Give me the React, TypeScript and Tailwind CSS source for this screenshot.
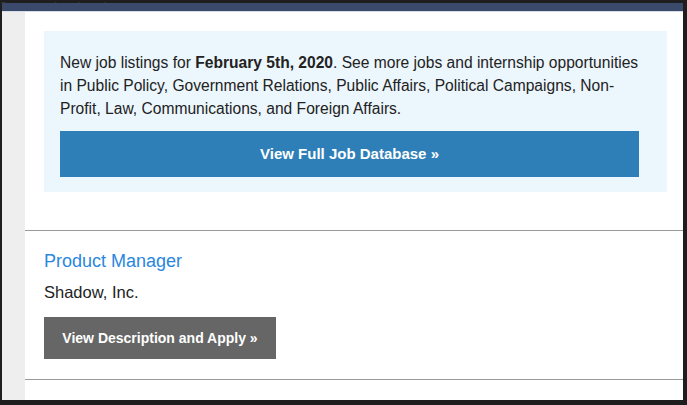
export default function App() {
  return (
    <div className="w-[687px] h-[405px] bg-[#1e1e1e] flex flex-col overflow-hidden" style={{ fontFamily: '"Liberation Sans", Arial, sans-serif' }}>
      {/* strip of page text above the window, mostly clipped */}
      <div className="h-[3px] overflow-hidden relative shrink-0">
        <div className="absolute left-0 bottom-0 text-[13px] leading-[13px] text-[#3a3a3a] translate-y-[10px]">first portal web today</div>
      </div>
      <div className="flex-1 flex ml-[2px] mr-[4px] mb-[5px] flex-col min-h-0">
        <div className="h-[8px] bg-[#3b4a6b] shrink-0" />
        <div className="h-[1px] bg-[#d5dde8] shrink-0" />
        <div className="flex-1 flex min-h-0">
          <div className="w-[23px] bg-[#eeeeee] shrink-0" />
          <div className="flex-1 bg-white flex flex-col overflow-hidden">
            <div className="pt-[19px] px-[19px] pb-[38px] pr-[16px]">
              <div className="bg-[#ecf6fd] px-[16px] pt-[20px] pb-[15px] pr-[20px]">
                <p className="text-[15.6px] leading-[23px] text-[#222222]">
                  New job listings for <b>February 5th, 2020</b>. See more jobs and internship opportunities in Public Policy, Government Relations, Public Affairs, Political Campaigns, Non-Profit, Law, Communications, and Foreign Affairs.
                </p>
                <div className="mt-[11px] h-[46px] mr-[8px] bg-[#2e7fb8] flex items-center justify-center text-white font-bold text-[15px]">
                  View Full Job Database »
                </div>
              </div>
            </div>
            <div className="h-[1px] bg-[#999999]" />
            <div className="px-[19px] pt-[18px] pb-[20px]">
              <div className="text-[18px] leading-[24px] text-[#2a87de]">Product Manager</div>
              <div className="mt-[8px] text-[16.5px] leading-[22px] text-[#222222]">Shadow, Inc.</div>
              <div className="mt-[14px] w-[232px] h-[42px] bg-[#666666] flex items-center justify-center text-white font-bold text-[14px]">
                View Description and Apply »
              </div>
            </div>
            <div className="h-[1px] bg-[#999999]" />
          </div>
        </div>
      </div>
    </div>
  );
}
